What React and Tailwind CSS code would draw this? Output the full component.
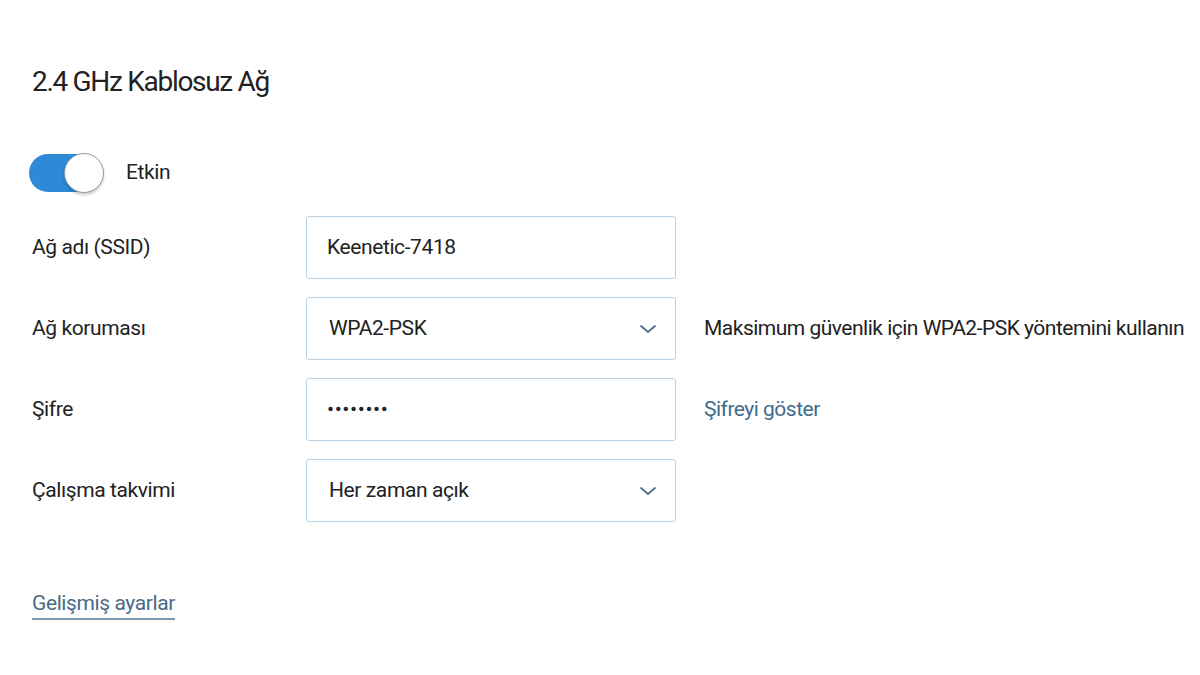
import React, { useState } from 'react';

function Chevron() {
  return (
    <svg width="18" height="10" viewBox="0 0 18 10" fill="none" className="text-[#4f6f8a]">
      <path d="M2 2l7 6 7-6" stroke="currentColor" strokeWidth="1.8" strokeLinecap="round" strokeLinejoin="round" />
    </svg>
  );
}

function Field({ children, className = '' }) {
  return (
    <div className={`w-[370px] h-[63px] border border-[#b9d3e3] rounded-[3px] bg-white flex items-center justify-between pl-[20px] pr-[18px] ${className}`}>
      {children}
    </div>
  );
}

function Row({ label, children, side }) {
  return (
    <div className="flex items-center h-[63px]">
      <div className="w-[274px] text-[21px] text-[#222]">{label}</div>
      {children}
      {side && <div className="ml-[28px] text-[21px] whitespace-nowrap tracking-[-0.5px]">{side}</div>}
    </div>
  );
}

export default function App() {
  const [on, setOn] = useState(true);
  return (
    <div className="w-[1200px] h-[675px] bg-white overflow-hidden pl-[32px] pt-[62px] text-[#222] tracking-[-0.4px]" style={{ fontFamily: 'Roboto, "Liberation Sans", sans-serif' }}>
      <h1 className="text-[28px] leading-[40px] font-normal text-[#222] tracking-[-1.3px]">2.4 GHz Kablosuz Ağ</h1>

      <div className="flex items-center mt-[50px] h-[42px]">
        <button
          onClick={() => setOn(!on)}
          className="relative w-[74px] h-[38px] rounded-full bg-[#2e8ad6] -ml-[3px]"
        >
          <span className="absolute right-[-1px] top-[-1px] w-[40px] h-[40px] rounded-full bg-white border border-[#8e9ba5] shadow-[0_2px_3px_rgba(0,0,0,0.2)]" />
        </button>
        <span className="ml-[23px] text-[21px]">Etkin</span>
      </div>

      <div className="flex flex-col gap-[18px] mt-[22px]">
        <Row label="Ağ adı (SSID)">
          <Field><span className="text-[21px]">Keenetic-7418</span></Field>
        </Row>
        <Row label="Ağ koruması" side={<span className="text-[#222]">Maksimum güvenlik için WPA2-PSK yöntemini kullanın</span>}>
          <Field className="pl-[22px]"><span className="text-[21px]">WPA2-PSK</span><Chevron /></Field>
        </Row>
        <Row label="Şifre" side={<span className="text-[#3f6b8c]">Şifreyi göster</span>}>
          <Field><span className="text-[21px] tracking-[0.6px]">••••••••</span></Field>
        </Row>
        <Row label="Çalışma takvimi">
          <Field className="pl-[22px]"><span className="text-[21px]">Her zaman açık</span><Chevron /></Field>
        </Row>
      </div>

      <div className="mt-[66px]">
        <a className="text-[21px] text-[#4a6b86] border-b-2 border-[#7f98ad] pb-[3px]">Gelişmiş ayarlar</a>
      </div>
    </div>
  );
}
